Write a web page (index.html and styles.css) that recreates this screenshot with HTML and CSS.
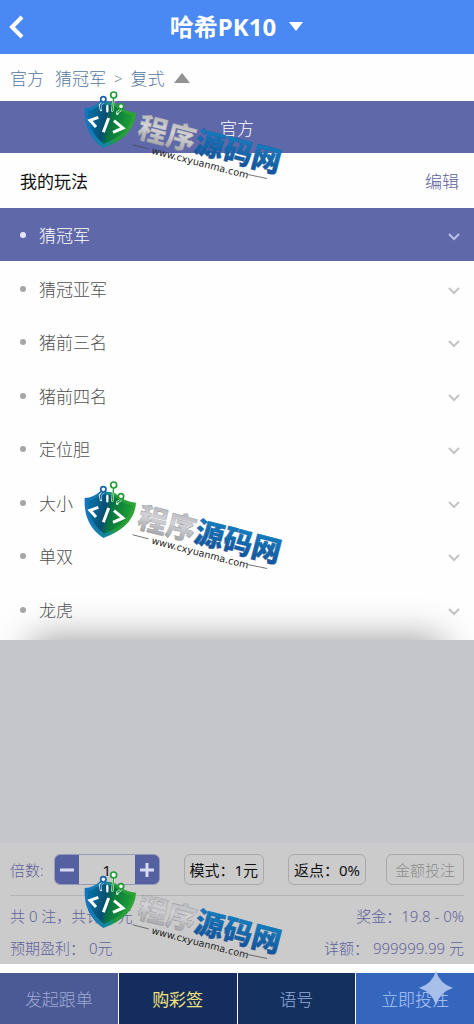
FILE: index.html
```html
<!DOCTYPE html>
<html lang="zh-CN">
<head>
  <meta charset="UTF-8" />
  <meta name="viewport" content="width=device-width, initial-scale=1.0"/>
  <title>哈希PK10</title>
  <link rel="stylesheet" href="styles.css">
</head>
<body>

  <!-- shared drawings -->
  <svg class="defs" width="0" height="0" aria-hidden="true">
    <defs>
      <linearGradient id="edge" x1="0" y1="0" x2="1" y2="0">
        <stop offset="0" stop-color="#1672c4"/>
        <stop offset="0.45" stop-color="#13889a"/>
        <stop offset="0.6" stop-color="#239a3c"/>
        <stop offset="1" stop-color="#2fa536"/>
      </linearGradient>
      <linearGradient id="shield" x1="0" y1="0" x2="1" y2="0.2">
        <stop offset="0" stop-color="#0877ad"/>
        <stop offset="0.45" stop-color="#064f72"/>
        <stop offset="0.6" stop-color="#08763f"/>
        <stop offset="1" stop-color="#1c9c35"/>
      </linearGradient>
      <linearGradient id="silver" x1="0" y1="0" x2="0" y2="1">
        <stop offset="0" stop-color="#a4a5a9"/>
        <stop offset="0.5" stop-color="#d4d4d8"/>
        <stop offset="1" stop-color="#97989c"/>
      </linearGradient>
      <linearGradient id="blue" x1="0" y1="0" x2="0" y2="1">
        <stop offset="0" stop-color="#118ccc"/>
        <stop offset="1" stop-color="#174b91"/>
      </linearGradient>
    </defs>
    <symbol id="chevron" viewBox="0 0 14 10">
      <path d="M2 2 L7 7 L12 2" fill="none" stroke="currentColor" stroke-width="2"/>
    </symbol>
    <symbol id="brand" class="brand" viewBox="0 0 630 330">
      <path d="M14 84 Q42 82 62 62 L104 68 Q130 94 168 98 Q164 170 70 204 Q10 165 14 84 Z" fill="url(#edge)"/>
      <path d="M23 92 Q47 88 65 72 L102 77 Q126 101 157 106 Q149 163 72 191 Q22 154 23 92 Z" fill="url(#shield)"/>
      <!-- circuit nodes -->
      <g fill="none" stroke-linecap="round" stroke-linejoin="round">
        <path d="M70 66 L60 76 L63 90 M101 53 L97 92 M123 86 L120 92 L112 97 V101 M82 78 V94" stroke="#fff" stroke-width="7"/>
        <path d="M70 66 L61 76 L63 88" stroke="#1461a9" stroke-width="4"/>
        <path d="M101 53 L97 92 M123 86 L120 92 L112 97" stroke="#239a36" stroke-width="4"/>
        <circle cx="70" cy="58" r="8" fill="#fff" stroke="#1461a9" stroke-width="5"/>
        <circle cx="101" cy="45" r="9" fill="#fff" stroke="#239a36" stroke-width="5"/>
        <circle cx="123" cy="79" r="8" fill="#fff" stroke="#239a36" stroke-width="5"/>
      </g>
      <path d="M55 112 L30 121 L48 141 M86 114 L70 157 M102 122 L129 144 L99 157" fill="none" stroke="#fff" stroke-width="9"/>
      <g transform="translate(168 170) rotate(14.5)">
        <text class="brand-name" x="0" y="0"><tspan fill="url(#silver)" stroke="#8c8d92">程序</tspan><tspan fill="url(#blue)" stroke="#1b5b9f">源码网</tspan></text>
        <text class="brand-url" x="56" y="38">www.cxyuanma.com</text>
        <path d="M-4 26 L46 26 M354 26 L412 23" fill="none" stroke="#444" stroke-width="2"/>
      </g>
    </symbol>
  </svg>

  <div class="page">

    <!-- title bar -->
    <header class="topbar">
      <button class="back" type="button" aria-label="返回">
        <svg width="16" height="24" viewBox="0 0 16 24"><path d="M13 2 L3 12 L13 22" fill="none" stroke="currentColor" stroke-width="4"/></svg>
      </button>
      <button class="game" type="button">
        <span>哈希PK10</span>
        <svg width="16" height="10" viewBox="0 0 16 10"><path d="M1 0 H15 L8 9 Z" fill="currentColor"/></svg>
      </button>
    </header>

    <nav class="crumbs">
      <a href="#">官方</a>
      <a href="#">猜冠军</a>
      <span class="sep">&gt;</span>
      <a href="#">复式</a>
      <svg width="18" height="10" viewBox="0 0 18 10"><path d="M9 0 L17 10 H1 Z" fill="#929292"/></svg>
    </nav>

    <button class="tab" type="button">官方</button>

    <div class="mine">
      <h2>我的玩法</h2>
      <a href="#">编辑</a>
    </div>

    <!-- play list -->
    <ul class="plays">
      <li><button class="play active" type="button"><span>猜冠军</span><svg class="chevron"><use href="#chevron"/></svg></button></li>
      <li><button class="play" type="button"><span>猜冠亚军</span><svg class="chevron"><use href="#chevron"/></svg></button></li>
      <li><button class="play" type="button"><span>猪前三名</span><svg class="chevron"><use href="#chevron"/></svg></button></li>
      <li><button class="play" type="button"><span>猪前四名</span><svg class="chevron"><use href="#chevron"/></svg></button></li>
      <li><button class="play" type="button"><span>定位胆</span><svg class="chevron"><use href="#chevron"/></svg></button></li>
      <li><button class="play" type="button"><span>大小</span><svg class="chevron"><use href="#chevron"/></svg></button></li>
      <li><button class="play" type="button"><span>单双</span><svg class="chevron"><use href="#chevron"/></svg></button></li>
      <li><button class="play" type="button"><span>龙虎</span><svg class="chevron"><use href="#chevron"/></svg></button></li>
    </ul>

    <main class="board"></main>

    <!-- bet settings -->
    <section class="bet">
      <div class="controls">
        <div class="times">
          <label for="times">倍数:</label>
          <div class="stepper">
            <button type="button" aria-label="减少"><svg width="14" height="14" viewBox="0 0 14 14"><path d="M0 7 H14" stroke="currentColor" stroke-width="3"/></svg></button>
            <input id="times" type="text" value="1">
            <button type="button" aria-label="增加"><svg width="14" height="14" viewBox="0 0 14 14"><path d="M0 7 H14 M7 0 V14" stroke="currentColor" stroke-width="3"/></svg></button>
          </div>
        </div>
        <button class="option" type="button">模式：1元</button>
        <div class="options">
          <button class="option" type="button">返点：0%</button>
          <button class="option" type="button" disabled>金额投注</button>
        </div>
      </div>
      <div class="row"><span>共 0 注，共计 0 元</span><span>奖金：19.8 - 0%</span></div>
      <div class="row"><span>预期盈利： 0元</span><span>详额： 999999.99 元</span></div>
    </section>

    <nav class="actions">
      <button class="follow" type="button">发起跟单</button>
      <button class="buy" type="button">购彩签</button>
      <button class="number" type="button">语号</button>
      <button class="submit" type="button">立即投注
        <svg class="spark" viewBox="0 0 34 34"><path d="M17 0 Q21 13 34 17 Q21 21 17 34 Q13 21 0 17 Q13 13 17 0 Z" fill="currentColor"/></svg>
      </button>
    </nav>

    <!-- watermarks over the page -->
    <svg class="mark mark-top"><use href="#brand"/></svg>
    <svg class="mark mark-middle"><use href="#brand"/></svg>
    <svg class="mark mark-bottom"><use href="#brand"/></svg>
  </div>

</body>
</html>
```
FILE: styles.css
```css
* {
  box-sizing: border-box;
}
body {
  margin: 0;
  font-family: "Noto Sans", "Noto Sans CJK SC", sans-serif;
  font-size: 17px;
  font-weight: 300;
  background-color: #fefefe;
}
button, input {
  margin: 0;
  padding: 0;
  border: none;
  background: none;
  color: inherit;
  font: inherit;
  cursor: pointer;
}
a {
  text-decoration: none;
}
.defs {
  position: absolute;
}
.page {
  position: relative;
  display: flex;
  flex-direction: column;
  min-height: 100vh;
}

/* title bar */
.topbar {
  display: grid;
  grid-template-columns: 40px 1fr 40px;
  align-items: center;
  height: 54px;
  background-color: #4a88f3;
  color: #fff;
}
.back {
  display: flex;
  padding-left: 9px;
}
.game {
  display: flex;
  justify-content: center;
  align-items: center;
  gap: 12px;
  font-size: 24px;
  font-weight: 700;
}
.game span {
  padding-bottom: 4px;
}
.crumbs {
  display: flex;
  align-items: center;
  height: 47px;
  padding: 0 10px;
  gap: 8px;
}
.crumbs a {
  color: #55779f;
}
.crumbs a:first-child {
  margin-right: 3px;
}
.sep {
  color: #888;
  font-size: 15px;
}
.tab {
  height: 52px;
  background-color: #5f69aa;
  color: #fff;
}
.mine {
  display: flex;
  justify-content: space-between;
  align-items: center;
  height: 55px;
  padding: 0 15px 0 20px;
}
.mine h2 {
  margin: 0;
  font-size: 17px;
  font-weight: 400;
  color: #111;
}
.mine a {
  color: #5b6197;
}

/* play list */
.plays {
  margin: 0;
  padding: 0 0 4px;
  list-style: none;
}
.plays li:nth-child(odd) {
  margin-bottom: 1px;
}
.play {
  display: flex;
  align-items: center;
  width: 100%;
  height: 53px;
  padding: 0 13px 0 20px;
  color: #505050;
}
.play::before {
  content: "";
  width: 6px;
  height: 6px;
  margin-right: 13px;
  border-radius: 50%;
  background-color: #a6a6a6;
}
.play.active {
  background-color: #5f69aa;
  color: #fff;
}
.play.active::before {
  background-color: #e4e8ff;
}
.chevron {
  width: 14px;
  height: 10px;
  margin-left: auto;
  margin-top: 4px;
  color: #c4c4c4;
}
.active .chevron {
  color: #b9bfe6;
}
.board {
  flex: 1;
  background-color: #c5c6cb;
  box-shadow: 0 -32px 36px -32px #949494;
}

/* bet settings */
.bet {
  padding: 11px 10px 0;
  background-color: #cbcbcb;
  border-bottom: 9px solid #fefefe;
  color: #62629a;
  font-size: 15px;
}
.controls {
  display: flex;
  justify-content: space-between;
  align-items: center;
  height: 42px;
  padding-bottom: 10px;
  margin-bottom: 4px;
  border-bottom: 1px solid #b3b3b3;
}
.times, .stepper {
  display: flex;
  align-items: center;
}
.times {
  gap: 10px;
}
.stepper {
  height: 31px;
  overflow: hidden;
  border: 1px solid #959bba;
  border-radius: 6px;
}
.stepper button {
  display: flex;
  justify-content: center;
  align-items: center;
  width: 24px;
  height: 31px;
  background-color: #5560a0;
  color: #d6daf0;
}
.stepper input {
  width: 56px;
  height: 31px;
  text-align: center;
  color: #111;
  font-weight: 400;
}
.options {
  display: flex;
  gap: 20px;
}
.option {
  height: 31px;
  padding: 0 5px;
  border: 1px solid #a9a9a9;
  border-radius: 6px;
  color: #111;
  font-weight: 400;
}
.option:disabled {
  padding: 0 8px;
  color: #8b8b8b;
  font-weight: 300;
}
.row {
  display: flex;
  justify-content: space-between;
  height: 32px;
  line-height: 32px;
}

/* bottom buttons */
.actions {
  display: grid;
  grid-template-columns: repeat(4, 1fr);
  gap: 1px;
  height: 51px;
}
.follow {
  background-color: #4b5994;
  color: #9ea9d6;
}
.buy {
  background-color: #142d5e;
  color: #f0e37d;
  font-weight: 400;
}
.number {
  background-color: #14305f;
  color: #95acd9;
}
.submit {
  position: relative;
  background-color: #3566be;
  color: #b0c9f6;
}
.spark {
  position: absolute;
  top: -2px;
  right: 21px;
  width: 34px;
  height: 34px;
  color: #a8bfe9;
}

/* watermarks */
.mark {
  position: absolute;
  left: 80px;
  width: 210px;
  height: 110px;
  overflow: visible;
  pointer-events: none;
}
.mark-top {
  top: 80px;
}
.mark-middle {
  top: 470px;
}
.mark-bottom {
  bottom: 54px;
}
.brand {
  overflow: visible;
}
.brand-name {
  font-family: "Noto Sans CJK SC", sans-serif;
  font-size: 88px;
  font-weight: 900;
  stroke-width: 1px;
}
.brand-url {
  font-family: "DejaVu Sans", sans-serif;
  font-size: 29px;
  font-weight: 400;
  fill: #222;
}
```
